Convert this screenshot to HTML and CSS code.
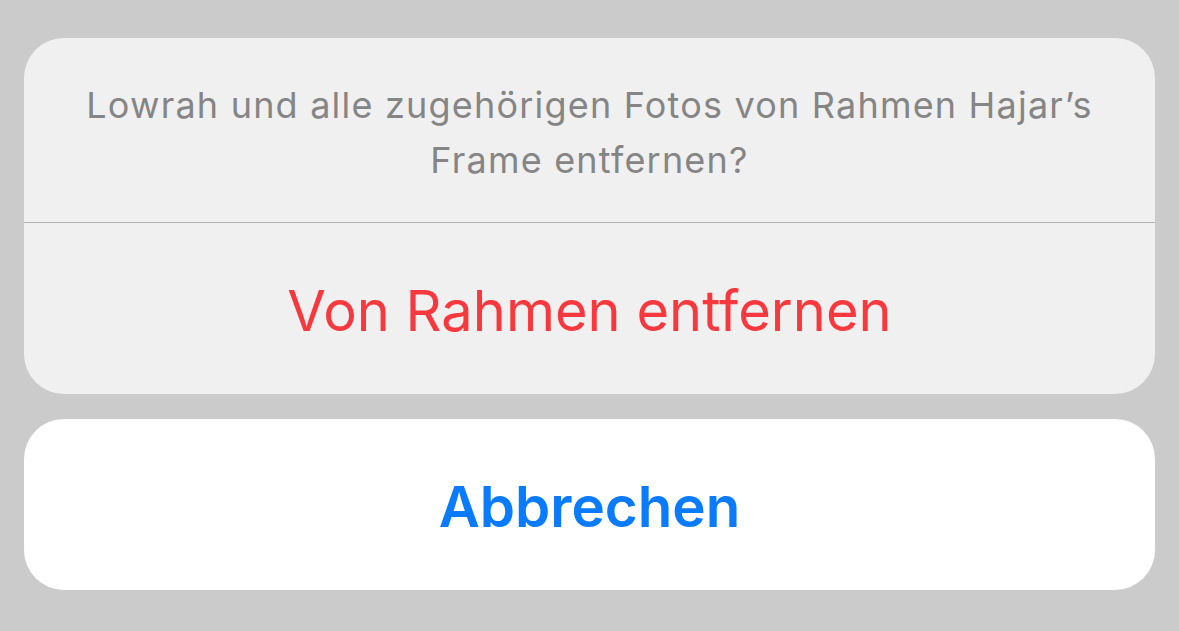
FILE: index.html
```html
<!DOCTYPE html>
<html lang="de">
<head>
<meta charset="utf-8">
<link rel="stylesheet" href="styles.css">
</head>
<body>
<div class="sheet">
  <div class="group">
    <div class="message">Lowrah und alle zugehörigen Fotos von Rahmen Hajar’s Frame entfernen?</div>
    <div class="action destructive">Von Rahmen entfernen</div>
  </div>
  <div class="cancel">Abbrechen</div>
</div>
</body>
</html>
```
FILE: styles.css
```css
html, body {
  margin: 0;
  padding: 0;
  background: #cbcbcb;
  font-family: Inter, "Noto Sans", sans-serif;
}
.sheet {
  padding: 38px 24px 0 24px;
  display: flex;
  flex-direction: column;
  gap: 25px;
}
.group {
  background: #f0f0f0;
  border-radius: 40px;
  overflow: hidden;
  display: flex;
  flex-direction: column;
}
.message {
  height: 185px;
  box-sizing: border-box;
  padding: 40px 48px 0 48px;
  text-align: center;
  color: #858585;
  font-size: 36px;
  line-height: 55px;
  letter-spacing: 1.2px;
  border-bottom: 1px solid #b3b3b3;
}
.action {
  height: 171px;
  padding-top: 4px;
  box-sizing: border-box;
  display: flex;
  align-items: center;
  justify-content: center;
  font-size: 56px;
}
.destructive {
  color: #f7383e;
}
.cancel {
  height: 171px;
  padding-top: 3px;
  box-sizing: border-box;
  background: #ffffff;
  border-radius: 40px;
  display: flex;
  align-items: center;
  justify-content: center;
  font-size: 56.5px;
  font-weight: 600;
  color: #0a7aff;
}
```
